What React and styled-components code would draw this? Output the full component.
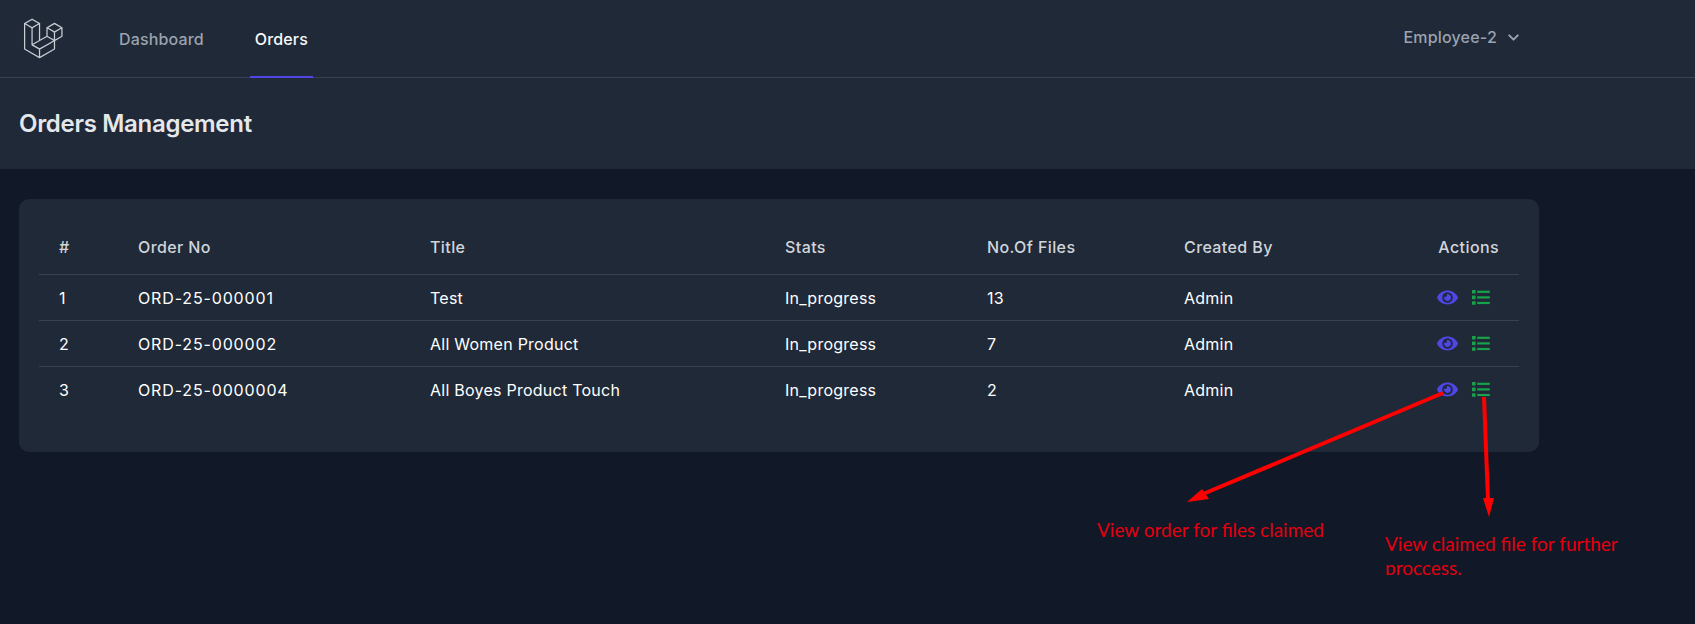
import React from 'react';
import styled, { createGlobalStyle } from 'styled-components';
import { FaEye } from 'react-icons/fa';
import { ChevronDown } from 'lucide-react';

const Global = createGlobalStyle`
  html, body { margin: 0; padding: 0; height: 624px; overflow: hidden; background: #111827; }
  body { font-family: Inter, "Open Sans", sans-serif; }
`;
const Page = styled.div`position: relative; width: 1695px; height: 624px; background: #111827; overflow: hidden;`;
const TopBar = styled.nav`height: 77px; background: #1f2937; border-bottom: 1px solid #374151;`;
const BarInner = styled.div`width: 1520px; height: 100%; margin-left: 19px; display: flex; align-items: stretch;`;
const LogoWrap = styled.div`display: flex; align-items: center; width: 95px; svg { width: 45px; height: 45px; fill: #c9cdd3; }`;
const NavLinks = styled.div`display: flex; gap: 41px;`;
const NavLink = styled.a`
  display: flex; align-items: center; padding: 1px 5px 0; height: 78px; box-sizing: border-box;
  font-size: 16px; font-weight: 500; letter-spacing: 0.15px;
  color: ${p => (p.$active ? '#f9fafb' : '#9ca3af')};
  border-bottom: 2px solid ${p => (p.$active ? '#4f46e5' : 'transparent')};
`;
const UserMenu = styled.div`
  margin-left: auto; display: flex; align-items: center; gap: 8px; padding-bottom: 3px;
  font-size: 16px; font-weight: 500; letter-spacing: 0.2px; color: #9ca3af; margin-right: 17px;
`;
const PageHeader = styled.header`height: 91px; background: #1f2937; display: flex; align-items: center; padding-left: 19px;`;
const Title = styled.h2`margin: 0; font-size: 24px; font-weight: 600; color: #e5e7eb; letter-spacing: -0.3px;`;
const Main = styled.main`padding: 30px 0 0 19px;`;
const Card = styled.section`width: 1520px; height: 253px; box-sizing: border-box; padding: 20px 20px 40px; background: #1f2937; border-radius: 10px;`;
const Table = styled.table`width: 1480px; table-layout: fixed; border-collapse: collapse; font-size: 16px;`;
const HeadCell = styled.th`
  height: 55px; padding: 1px 20px 0; box-sizing: border-box; text-align: ${p => p.$align || 'left'};
  font-weight: 500; letter-spacing: 0.4px; color: #d1d5db; border-bottom: 1px solid #374151;
`;
const Row = styled.tr`border-bottom: 1px solid #374151; &:last-child { border-bottom: 0; }`;
const Cell = styled.td`
  height: 46px; padding: 1px 20px 0; box-sizing: border-box; color: #fff; font-weight: 400;
  letter-spacing: ${p => (p.$code ? '0.85px' : '0.25px')};
  white-space: nowrap;
`;
const Actions = styled.div`display: flex; align-items: center; justify-content: flex-end; gap: 14px; padding-right: 9px; margin-top: -1px;`;
const Overlay = styled.svg`position: absolute; left: 0; top: 0; width: 1695px; height: 624px; pointer-events: none;`;
const Note = styled.div`
  position: absolute; left: ${p => p.$x}px; top: ${p => p.$y}px; width: ${p => p.$w}px; height: ${p => p.$h}px;
  overflow: hidden; font-family: Lato, sans-serif; font-size: 19px; line-height: 24px; color: #e2000f; white-space: nowrap;
`;

const rows = [
  ['1', 'ORD-25-000001', 'Test', 'In_progress', '13', 'Admin'],
  ['2', 'ORD-25-000002', 'All Women Product', 'In_progress', '7', 'Admin'],
  ['3', 'ORD-25-0000004', 'All Boyes Product Touch', 'In_progress', '2', 'Admin'],
];
const widths = [79, 292, 355, 202, 197, 178, 177];

const Logo = () => (
  <svg viewBox="0 0 316 316" xmlns="http://www.w3.org/2000/svg">
    <path d="M305.8 81.125C305.77 80.995 305.69 80.885 305.65 80.755C305.56 80.525 305.49 80.285 305.37 80.075C305.29 79.935 305.17 79.815 305.07 79.685C304.94 79.515 304.83 79.325 304.68 79.175C304.55 79.045 304.39 78.955 304.25 78.845C304.09 78.715 303.95 78.575 303.77 78.475L251.32 48.275C249.97 47.495 248.31 47.495 246.96 48.275L194.51 78.475C194.33 78.575 194.19 78.725 194.03 78.845C193.89 78.955 193.73 79.045 193.6 79.175C193.45 79.325 193.34 79.515 193.21 79.685C193.11 79.815 192.99 79.935 192.91 80.075C192.79 80.285 192.71 80.525 192.63 80.755C192.58 80.875 192.51 80.995 192.48 81.125C192.38 81.495 192.33 81.875 192.33 82.265V139.625L148.62 164.795V52.575C148.62 52.185 148.57 51.805 148.47 51.435C148.44 51.305 148.36 51.195 148.32 51.065C148.23 50.835 148.16 50.595 148.04 50.385C147.96 50.245 147.84 50.125 147.74 49.995C147.61 49.825 147.5 49.635 147.35 49.485C147.22 49.355 147.06 49.265 146.92 49.155C146.76 49.025 146.62 48.885 146.44 48.785L93.99 18.585C92.64 17.805 90.98 17.805 89.63 18.585L37.18 48.785C37 48.885 36.86 49.035 36.7 49.155C36.56 49.265 36.4 49.355 36.27 49.485C36.12 49.635 36.01 49.825 35.88 49.995C35.78 50.125 35.66 50.245 35.58 50.385C35.46 50.595 35.38 50.835 35.3 51.065C35.25 51.185 35.18 51.305 35.15 51.435C35.05 51.805 35 52.185 35 52.575V232.235C35 233.795 35.84 235.245 37.19 236.025L142.1 296.425C142.33 296.555 142.58 296.635 142.83 296.725C142.95 296.765 143.06 296.835 143.18 296.865C143.55 296.965 143.93 297.015 144.31 297.015C144.69 297.015 145.07 296.965 145.44 296.865C145.55 296.835 145.65 296.775 145.76 296.735C146.02 296.645 146.28 296.565 146.52 296.425L251.43 236.025C252.79 235.245 253.62 233.805 253.62 232.235V174.885L303.8 145.985C305.16 145.205 305.99 143.765 305.99 142.195V82.265C305.99 81.875 305.94 81.495 305.84 81.125H305.8ZM144.2 227.205L100.57 202.515L146.39 176.135L196.66 147.195L240.33 172.335L208.29 190.625L144.2 227.205ZM244.75 114.995V164.795L226.39 154.225L201.03 139.625V89.825L219.39 100.395L244.75 114.995ZM249.12 57.105L292.81 82.265L249.12 107.425L205.43 82.265L249.12 57.105ZM114.49 184.425L96.13 194.995V85.305L121.49 70.705L139.85 60.135V169.815L114.49 184.425ZM91.76 27.425L135.45 52.585L91.76 77.745L48.07 52.585L91.76 27.425ZM43.67 60.135L62.03 70.705L87.39 85.305V202.545V202.555V202.565C87.39 202.735 87.44 202.895 87.46 203.055C87.49 203.265 87.49 203.485 87.55 203.695V203.705C87.6 203.875 87.69 204.035 87.76 204.195C87.84 204.375 87.89 204.575 87.99 204.745C87.99 204.745 87.99 204.755 88 204.755C88.09 204.905 88.22 205.035 88.33 205.175C88.45 205.335 88.55 205.495 88.69 205.635L88.7 205.645C88.82 205.765 88.98 205.855 89.12 205.965C89.28 206.085 89.42 206.225 89.59 206.325C89.6 206.325 89.6 206.325 89.61 206.335C89.62 206.335 89.62 206.345 89.63 206.345L139.87 234.775V285.065L43.67 229.705V60.135ZM244.75 229.705L148.58 285.075V234.775L219.8 194.115L244.75 179.875V229.705ZM297.2 139.625L253.49 164.795V114.995L278.85 100.395L297.21 89.825V139.625H297.2Z" />
  </svg>
);

const ListIcon = () => (
  <svg width="18" height="15" viewBox="0 0 18 15" fill="#16a34a" xmlns="http://www.w3.org/2000/svg">
    <rect x="0" y="0" width="3.6" height="3.6" rx="0.6" />
    <rect x="0" y="5.6" width="3.6" height="3.6" rx="0.6" />
    <rect x="0" y="11.2" width="3.6" height="3.6" rx="0.6" />
    <rect x="5.2" y="0.7" width="12.6" height="2.2" />
    <rect x="5.2" y="6.3" width="12.6" height="2.2" />
    <rect x="5.2" y="11.9" width="12.6" height="2.2" />
  </svg>
);

export default function App() {
  return (
    <Page>
      <Global />
      <TopBar>
        <BarInner>
          <LogoWrap><Logo /></LogoWrap>
          <NavLinks>
            <NavLink>Dashboard</NavLink>
            <NavLink $active>Orders</NavLink>
          </NavLinks>
          <UserMenu>Employee-2 <ChevronDown size={17} strokeWidth={2.8} /></UserMenu>
        </BarInner>
      </TopBar>
      <PageHeader><Title>Orders Management</Title></PageHeader>
      <Main>
        <Card>
          <Table>
            <colgroup>{widths.map((w, i) => <col key={i} width={w} />)}</colgroup>
            <thead>
              <tr>
                <HeadCell>#</HeadCell>
                <HeadCell>Order No</HeadCell>
                <HeadCell>Title</HeadCell>
                <HeadCell>Stats</HeadCell>
                <HeadCell>No.Of Files</HeadCell>
                <HeadCell>Created By</HeadCell>
                <HeadCell $align="right">Actions</HeadCell>
              </tr>
            </thead>
            <tbody>
              {rows.map(r => (
                <Row key={r[0]}>
                  {r.map((c, i) => <Cell key={i} $code={i === 1}>{c}</Cell>)}
                  <Cell>
                    <Actions>
                      <FaEye size={21} color="#4f46e5" />
                      <ListIcon />
                    </Actions>
                  </Cell>
                </Row>
              ))}
            </tbody>
          </Table>
        </Card>
      </Main>
      <Overlay viewBox="0 0 1695 624">
        <line x1="1443" y1="393" x2="1203" y2="494" stroke="#fe0000" strokeWidth="4" />
        <polygon points="1187,502 1202,489 1209,499" fill="#fe0000" />
        <line x1="1484" y1="397" x2="1488" y2="500" stroke="#fe0000" strokeWidth="4" />
        <polygon points="1489,517 1483,498 1494,498" fill="#fe0000" />
      </Overlay>
      <Note $x={1097} $y={518} $w={260} $h={26}>View order for files claimed</Note>
      <Note $x={1385} $y={532} $w={260} $h={43}>View claimed file for further<br />proccess.</Note>
    </Page>
  );
}
